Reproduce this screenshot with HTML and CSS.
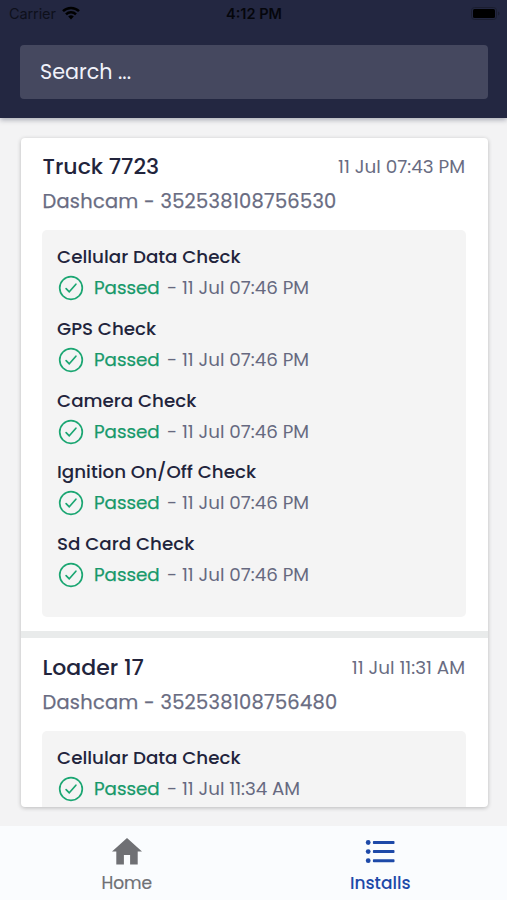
FILE: index.html
```html
<!DOCTYPE html>
<html lang="en">
<head>
<meta charset="utf-8">
<meta name="viewport" content="width=device-width, initial-scale=1">
<title>Installs</title>
<link rel="stylesheet" href="styles.css">
</head>
<body>
<svg width="0" height="0" class="defs" aria-hidden="true">
  <symbol id="check" viewBox="0 0 26 26">
    <circle cx="13" cy="13" r="11.3" fill="none" stroke="currentColor" stroke-width="1.7"/>
    <path d="M8.1 13.7l3.2 3.1 6.6-7.6" fill="none" stroke="currentColor" stroke-width="1.7" stroke-linecap="round" stroke-linejoin="round"/>
  </symbol>
</svg>
<header class="header">
  <div class="status-bar">
    <div class="carrier"><span>Carrier</span>
      <svg class="wifi" viewBox="0 0 18 14" fill="none" stroke="currentColor" stroke-width="2.5"><path d="M1 5.2a11.4 11.4 0 0 1 16 0M4 8.4a7.1 7.1 0 0 1 10 0"/><path d="M9 13.5L6.2 10.6a4 4 0 0 1 5.6 0z" fill="currentColor" stroke="none"/></svg>
    </div>
    <div class="clock">4:12 PM</div>
    <div class="battery-wrap"><svg class="battery" viewBox="0 0 29 13"><rect x=".5" y=".5" width="25" height="12" rx="3" fill="none" stroke="#1b1e30"/><rect x="2" y="2" width="22" height="9" rx="1.5" fill="#000"/><path d="M27 4.5c2 .7 2 3.3 0 4z" fill="#1b1e30"/></svg></div>
  </div>
  <div class="search"><span>Search ...</span></div>
</header>
<main class="main">
  <div class="card">
    <section class="item">
      <div class="item-head"><h2 class="name">Truck 7723</h2><time class="date">11 Jul 07:43 PM</time></div>
      <div class="device">Dashcam - 352538108756530</div>
      <div class="checks">
        <div class="check"><h3>Cellular Data Check</h3><div class="result"><svg><use href="#check"/></svg><b>Passed</b><span>- 11 Jul 07:46 PM</span></div></div>
        <div class="check"><h3>GPS Check</h3><div class="result"><svg><use href="#check"/></svg><b>Passed</b><span>- 11 Jul 07:46 PM</span></div></div>
        <div class="check"><h3>Camera Check</h3><div class="result"><svg><use href="#check"/></svg><b>Passed</b><span>- 11 Jul 07:46 PM</span></div></div>
        <div class="check"><h3>Ignition On/Off Check</h3><div class="result"><svg><use href="#check"/></svg><b>Passed</b><span>- 11 Jul 07:46 PM</span></div></div>
        <div class="check"><h3>Sd Card Check</h3><div class="result"><svg><use href="#check"/></svg><b>Passed</b><span>- 11 Jul 07:46 PM</span></div></div>
      </div>
    </section>
    <section class="item">
      <div class="item-head"><h2 class="name">Loader 17</h2><time class="date">11 Jul 11:31 AM</time></div>
      <div class="device">Dashcam - 352538108756480</div>
      <div class="checks">
        <div class="check"><h3>Cellular Data Check</h3><div class="result"><svg><use href="#check"/></svg><b>Passed</b><span>- 11 Jul 11:34 AM</span></div></div>
      </div>
    </section>
  </div>
</main>
<nav class="nav">
  <a class="tab"><svg viewBox="0 0 30 27" width="30" height="27"><path d="M15 0L0 13.6h4.3V26.5h7.6V17h6.2v9.5h7.6V13.6H30L25 9.1z" fill="currentColor"/></svg><span>Home</span></a>
  <a class="tab active"><svg viewBox="0 0 30 27" width="30" height="27"><g fill="currentColor"><circle cx="3.2" cy="4.5" r="2.4"/><circle cx="3.2" cy="13.6" r="2.4"/><circle cx="3.2" cy="22.7" r="2.4"/><rect x="7.9" y="3" width="21.6" height="3" rx=".8"/><rect x="7.9" y="12.1" width="21.6" height="3" rx=".8"/><rect x="7.9" y="21.2" width="21.6" height="3" rx=".8"/></g></svg><span>Installs</span></a>
</nav>
</body>
</html>
```
FILE: styles.css
```css
* { box-sizing: border-box; }
body {
  margin: 0;
  height: 900px;
  display: flex;
  flex-direction: column;
  overflow: hidden;
  background: #f3f3f4;
  color: #22243c;
  font-family: Poppins, Inter, "Liberation Sans", sans-serif;
  white-space: nowrap;
}
h2, h3 { margin: 0; font-weight: 500; }
.defs { position: absolute; }
.header {
  flex: none;
  height: 118px;
  background: #232741;
  box-shadow: 0 2px 5px rgba(35, 39, 65, .35);
}
.status-bar {
  height: 45px;
  padding: 4px 7px 0 9px;
  display: grid;
  grid-template-columns: 1fr auto 1fr;
  align-items: start;
  color: #05060c;
  font: 14.5px/20px Inter, sans-serif;
}
.carrier { display: flex; gap: 6px; color: #0e101b; letter-spacing: -.1px; }
.wifi { width: 18px; height: 14px; margin-top: 2px; color: #000; }
.clock { font-weight: 600; margin-left: -1px; }
.battery-wrap { display: flex; justify-content: flex-end; padding-top: 3px; }
.battery { width: 29px; height: 13px; }
.search {
  height: 54px;
  margin: 0 19px 0 20px;
  padding-left: 20px;
  border-radius: 4px;
  background: #45485f;
  color: #f1f2fa;
  font-size: 20.7px;
  line-height: 54px;
}
.main { flex: none; height: 708px; padding: 20px 19.5px 19px 20.5px; }
.card {
  height: 669px;
  border-radius: 4px;
  overflow: hidden;
  background: #fff;
  box-shadow: 0 1px 4px rgba(0, 0, 0, .24);
}
.item { padding: 14px 22px 14px 21.5px; }
.item + .item { border-top: 7px solid #e9ebeb; padding-top: 15px; }
.item-head { display: flex; justify-content: space-between; padding: 0 .5px; }
.name { font-size: 22px; line-height: 30px; }
.date { font-size: 18.4px; line-height: 30px; color: #696c82; }
.device { height: 38px; padding: 1px 0 0 .5px; font-size: 19.4px; line-height: 38px; letter-spacing: .27px; color: #696c82; -webkit-text-stroke: .25px currentColor; }
.checks {
  height: 387px;
  margin-top: 10px;
  padding: 11px 15px 0;
  border-radius: 5px;
  background: #f4f4f4;
}
.check { height: 71.75px; }
.check h3 { font-size: 18.3px; line-height: 32px; }
.result { display: flex; align-items: center; font-size: 18.3px; line-height: 30px; color: #666980; }
.result svg { width: 26px; height: 26px; margin: 0 10px 0 1px; color: #1ba672; }
.result b { width: 73px; font-weight: 400; color: #17996a; -webkit-text-stroke: .25px currentColor; }
.nav {
  flex: none;
  height: 74px;
  display: flex;
  background: #fafcfe;
}
.tab { flex: 1; display: flex; flex-direction: column; align-items: center; padding-top: 12px; color: #6f7074; font-size: 17px; line-height: 24px; }
.tab svg { margin-bottom: 6px; }
.tab span { -webkit-text-stroke: .2px currentColor; }
.tab.active { color: #1d49a8; font-weight: 500; }
.tab.active span { -webkit-text-stroke: 0; }
```
